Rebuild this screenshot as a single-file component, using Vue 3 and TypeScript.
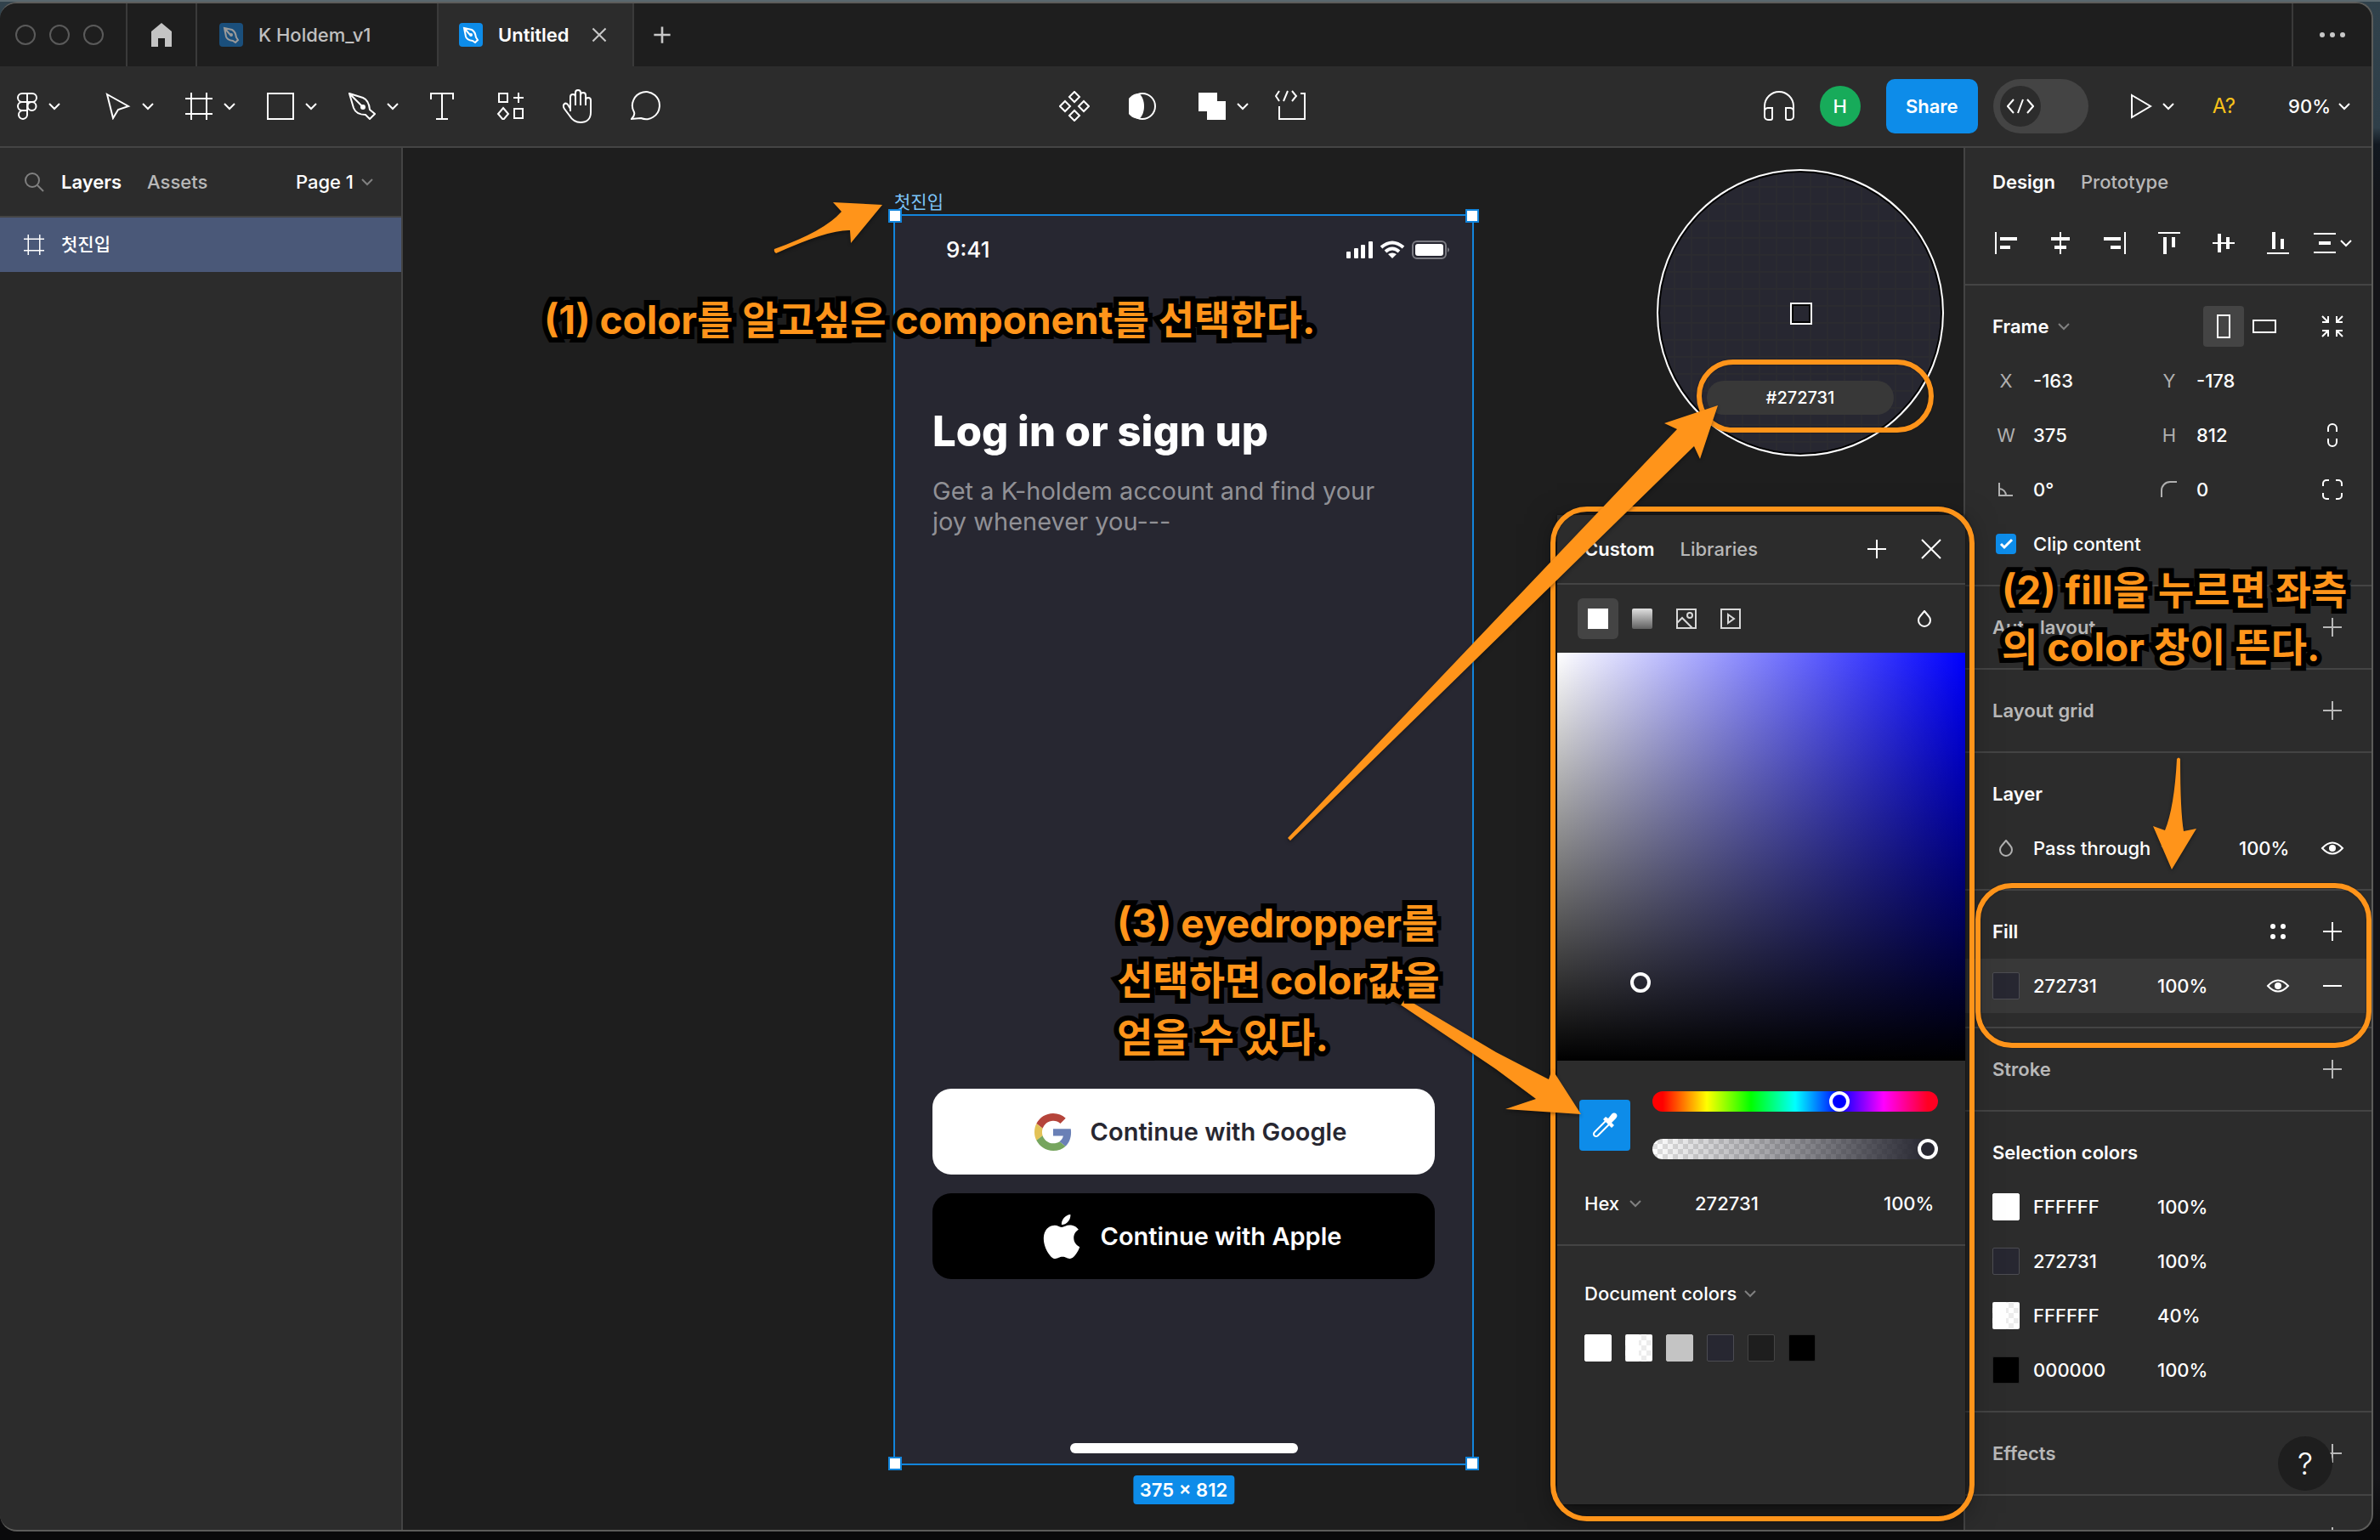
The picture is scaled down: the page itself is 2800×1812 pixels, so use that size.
<script setup lang="ts">
import { ref } from 'vue'

interface Paint {
  id: number
  hex: string
  opacity: string
  kind?: string
}

interface Tool {
  icon: string
  label: string
  menu: boolean
}

const leftTools: Tool[] = [
  { icon: 'move', label: 'Move', menu: true },
  { icon: 'frame', label: 'Frame', menu: true },
  { icon: 'rect', label: 'Rectangle', menu: true },
  { icon: 'pen', label: 'Pen', menu: true },
  { icon: 'text', label: 'Text', menu: false },
  { icon: 'resources', label: 'Resources', menu: false },
  { icon: 'hand', label: 'Hand', menu: false },
  { icon: 'comment', label: 'Comment', menu: false },
]

const centerTools: Tool[] = [
  { icon: 'component', label: 'Create component', menu: false },
  { icon: 'mask', label: 'Use as mask', menu: false },
  { icon: 'union', label: 'Union selection', menu: true },
  { icon: 'devbox', label: 'Ready for dev', menu: false },
]

const aligns = ['al-left', 'al-hc', 'al-right', 'al-top', 'al-vc', 'al-bottom']

const x = ref('-163')
const y = ref('-178')
const w = ref('375')
const h = ref('812')
const rotation = ref('0°')
const radius = ref('0')
const clip = ref(true)
const devMode = ref(false)
const fillHex = ref('272731')
const hue = ref(240)
const alpha = ref(100)

const selectionColors: Paint[] = [
  { id: 1, hex: 'FFFFFF', opacity: '100%', kind: 'white' },
  { id: 2, hex: '272731', opacity: '100%', kind: 'navy' },
  { id: 3, hex: 'FFFFFF', opacity: '40%', kind: 'half' },
  { id: 4, hex: '000000', opacity: '100%', kind: 'black' },
]

const documentColors = ['white', 'half', 'gray', 'navy', 'dark', 'black']
</script>

<template>
  <div class="desktop">
    <svg class="sprite" aria-hidden="true">
      <symbol id="chev" viewBox="0 0 16 16"><path d="M2 5l6 6 6-6" /></symbol>
      <symbol id="plus" viewBox="0 0 32 32"><path d="M5 16h22M16 5v22" /></symbol>
      <symbol id="minus" viewBox="0 0 32 32"><path d="M5 16h22" /></symbol>
      <symbol id="cross" viewBox="0 0 32 32"><path d="M5 5l22 22M27 5L5 27" /></symbol>
      <symbol id="logo" viewBox="0 0 32 32">
        <path d="M16 1h-6a5 5 0 0 0 0 10h6zM16 1h6a5 5 0 0 1 0 10h-6zM16 11h-6a5 5 0 0 0 0 10h6zM16 21h-6a5 5 0 1 0 6 5z" />
        <circle cx="21.500" cy="16" r="5" />
      </symbol>
      <symbol id="move" viewBox="0 0 32 32"><path d="M4 2l25 14-12 4-6 10z" /></symbol>
      <symbol id="frame" viewBox="0 0 32 32"><path d="M7 0v32M25 0v32M0 7h32M0 25h32" /></symbol>
      <symbol id="rect" viewBox="0 0 32 32"><path d="M1 1h30v30H1z" /></symbol>
      <symbol id="pen" viewBox="0 0 32 32">
        <path d="M1 1l16 5q7 3 8 14l6 5-6 6-5-5q-11 0-14-8zM1 1l15 15" />
        <circle cx="17" cy="17" r="2" fill="currentColor" />
      </symbol>
      <symbol id="text" viewBox="0 0 32 32"><path d="M3 8V1h26v7M16 1v30M9 31h14" /></symbol>
      <symbol id="resources" viewBox="0 0 32 32">
        <path d="M3 1h10v10H3zM21 19h10v11H21zM26 0v12M20 6h12M8 18l6 7-6 7-6-7z" />
      </symbol>
      <symbol id="hand" viewBox="0 0 40 40">
        <path d="M11 26V9a3 3 0 0 1 6 0V4a3 3 0 0 1 6 0v3a3 3 0 0 1 6 0v6a3 3 0 0 1 6 0v14c0 8-5 12-12 12-6 0-10-3-13-8L4 23c-3-5 1-8 4-5l3 5M17 8v11M23 7v12M29 9v10" />
      </symbol>
      <symbol id="comment" viewBox="0 0 36 36"><path d="M1 33c3-3 4-5 3-8A16 16 0 1 1 12 32z" /></symbol>
      <symbol id="component" viewBox="0 0 36 36">
        <path d="M18 1l6 6-6 6-6-6zM7 12l6 6-6 6-6-6zM29 12l6 6-6 6-6-6zM18 23l6 6-6 6-6-6z" />
      </symbol>
      <symbol id="mask" viewBox="0 0 32 32">
        <circle cx="16" cy="16" r="15" />
        <path d="M12 1a15 15 0 0 0 0 30c8-6 8-24 0-30z" fill="currentColor" stroke="none" />
      </symbol>
      <symbol id="union" viewBox="0 0 32 32">
        <path d="M0 0h22v10h10v22H10V22H0z" fill="currentColor" stroke="none" />
      </symbol>
      <symbol id="devbox" viewBox="0 0 40 40">
        <path d="M30 5h5v30H5V20M5 2L1 8l4 6M15 2l-5 12M20 2l5 6-5 6" />
      </symbol>
      <symbol id="code" viewBox="0 0 32 32"><path d="M8 8l-7 8 7 8M24 8l7 8-7 8M19 8l-6 16" /></symbol>
      <symbol id="headphones" viewBox="0 0 36 36">
        <path d="M1 30V18a17 17 0 0 1 34 0v12M10 20H5a4 4 0 0 0-4 4v6a4 4 0 0 0 4 4h3a2 2 0 0 0 2-2zM26 20h5a4 4 0 0 1 4 4v6a4 4 0 0 1-4 4h-3a2 2 0 0 1-2-2z" />
      </symbol>
      <symbol id="play" viewBox="0 0 32 32"><path d="M5 3l22 13L5 29z" /></symbol>
      <symbol id="search" viewBox="0 0 24 24"><circle cx="10" cy="10" r="8" /><path d="M16 16l7 7" /></symbol>
      <symbol id="al-left" viewBox="0 0 26 26"><path class="s" d="M0 0h2v26H0zM6 6h20v4H6zM6 16h12v4H6z" /></symbol>
      <symbol id="al-hc" viewBox="0 0 26 26"><path class="s" d="M12 0h2v26h-2zM2 6h22v4H2zM6 16h14v4H6z" /></symbol>
      <symbol id="al-right" viewBox="0 0 26 26"><path class="s" d="M24 0h2v26h-2zM0 6h20v4H0zM8 16h12v4H8z" /></symbol>
      <symbol id="al-top" viewBox="0 0 26 26"><path class="s" d="M0 0h26v2H0zM6 6h4v20H6zM16 6h4v12h-4z" /></symbol>
      <symbol id="al-vc" viewBox="0 0 26 26"><path class="s" d="M0 12h26v2H0zM6 2h4v22H6zM16 6h4v14h-4z" /></symbol>
      <symbol id="al-bottom" viewBox="0 0 26 26"><path class="s" d="M0 24h26v2H0zM6 0h4v20H6zM16 8h4v12h-4z" /></symbol>
      <symbol id="tidy" viewBox="0 0 26 26"><path class="s" d="M0 1h26v2H0zM0 23h26v2H0zM6 11h14v4H6z" /></symbol>
      <symbol id="shrink" viewBox="0 0 26 26">
        <path d="M1 1l7 7M1 8h7V1M25 1l-7 7M25 8h-7V1M1 25l7-7M1 18h7v7M25 25l-7-7M25 18h-7v7" />
      </symbol>
      <symbol id="link" viewBox="0 0 28 28"><path d="M9 10V6a5 5 0 0 1 10 0v4M9 18v4a5 5 0 0 0 10 0v-4" /></symbol>
      <symbol id="corners" viewBox="0 0 26 26">
        <path d="M2 9V6a4 4 0 0 1 4-4h3M17 2h3a4 4 0 0 1 4 4v3M24 17v3a4 4 0 0 1-4 4h-3M9 24H6a4 4 0 0 1-4-4v-3" />
      </symbol>
      <symbol id="angle" viewBox="0 0 20 20"><path d="M2 2v15h16M2 9a8 8 0 0 1 8 8" /></symbol>
      <symbol id="radius" viewBox="0 0 20 20"><path d="M1 19v-8A10 10 0 0 1 11 1h8" /></symbol>
      <symbol id="eye" viewBox="0 0 28 28">
        <path d="M2 14q12-13 24 0q-12 13-24 0z" />
        <circle cx="14" cy="14" r="4" fill="currentColor" stroke="none" />
      </symbol>
      <symbol id="drop" viewBox="0 0 20 20"><path d="M10 1l5 6a7 7 0 1 1-10 0z" /></symbol>
      <symbol id="dots" viewBox="0 0 20 20">
        <path class="s" d="M1 4a3 3 0 1 1 6 0a3 3 0 1 1-6 0M13 4a3 3 0 1 1 6 0a3 3 0 1 1-6 0M1 16a3 3 0 1 1 6 0a3 3 0 1 1-6 0M13 16a3 3 0 1 1 6 0a3 3 0 1 1-6 0" />
      </symbol>
      <symbol id="image" viewBox="0 0 24 24">
        <path d="M1 1h22v22H1zM1 17l6-6 12 12" />
        <circle cx="16" cy="8" r="3" />
      </symbol>
      <symbol id="video" viewBox="0 0 24 24"><path d="M1 1h22v22H1zM9 7l7 5-7 5z" /></symbol>
      <symbol id="dropper" viewBox="0 0 32 32">
        <path d="M17 11L4 24c-3 3 1 7 4 4l13-13" />
        <path class="s" d="M14 9l3-3 3 2 4-5c4-4 9 1 5 5l-5 5 3 3-3 3z" />
      </symbol>
      <symbol id="nib" viewBox="0 0 28 28">
        <path d="M6 6l9 2q4 2 5 9l2 3-3 3-3-2q-7-1-8-5zM6 6l7 8" />
        <circle cx="14" cy="14" r="1" />
      </symbol>
    </svg>

    <div class="window">
      <header class="tabs">
        <div class="lights"><i></i><i></i><i></i></div>
        <button class="home" aria-label="Home">
          <svg width="28" height="28" viewBox="0 0 28 28"><path d="M14 0L2 10v18h8V18h8v10h8V10z" fill="#c4c4c4" /></svg>
        </button>
        <a class="tab dim" href="#"><span class="file"><svg class="ic nib"><use href="#nib" /></svg></span>K Holdem_v1</a>
        <div class="tab active">
          <span class="file"><svg class="ic nib"><use href="#nib" /></svg></span>Untitled
          <button class="close" aria-label="Close tab"><svg class="ic heavy" width="22" height="22"><use href="#cross" /></svg></button>
        </div>
        <button class="newtab" aria-label="New tab"><svg class="ic heavy" width="28" height="28"><use href="#plus" /></svg></button>
        <button class="more" aria-label="More"><i></i><i></i><i></i></button>
      </header>

      <nav class="toolbar">
        <div class="group">
          <button class="tool logo menu" aria-label="Main menu">
            <svg class="ic"><use href="#logo" /></svg><svg class="ic chev"><use href="#chev" /></svg>
          </button>
          <button v-for="t in leftTools" :key="t.icon" class="tool" :class="[{ menu: t.menu }, t.icon]" :aria-label="t.label">
            <svg class="ic"><use :href="'#' + t.icon" /></svg>
            <svg v-if="t.menu" class="ic chev"><use href="#chev" /></svg>
          </button>
        </div>
        <div class="group">
          <button v-for="t in centerTools" :key="t.icon" class="tool" :class="[{ menu: t.menu }, t.icon]" :aria-label="t.label">
            <svg class="ic"><use :href="'#' + t.icon" /></svg>
            <svg v-if="t.menu" class="ic chev"><use href="#chev" /></svg>
          </button>
        </div>
        <div class="group end">
          <button class="phones" aria-label="Audio"><svg class="ic" width="36" height="36"><use href="#headphones" /></svg></button>
          <button class="avatar">H</button>
          <button class="share">Share</button>
          <label class="toggle">
            <input v-model="devMode" type="checkbox" aria-label="Dev Mode" />
            <span><svg class="ic"><use href="#code" /></svg></span>
          </label>
          <button class="present" aria-label="Present">
            <svg class="ic"><use href="#play" /></svg><svg class="ic chev"><use href="#chev" /></svg>
          </button>
          <button class="missing">A?</button>
          <button class="zoom">90%<svg class="ic chev"><use href="#chev" /></svg></button>
        </div>
      </nav>

      <div class="main">
        <aside class="left">
          <div class="lefthead">
            <svg class="ic search" width="24" height="24"><use href="#search" /></svg>
            <button class="strong">Layers</button>
            <button class="muted assets">Assets</button>
            <button class="page">Page 1<svg class="ic chev faint"><use href="#chev" /></svg></button>
          </div>
          <a class="layer" href="#"><svg class="ic" width="24" height="24"><use href="#frame" /></svg>첫진입</a>
        </aside>

        <section class="canvas">
          <span class="framelabel">첫진입</span>
          <div class="phone">
            <div class="status">
              <span>9:41</span>
              <svg width="122" height="22" viewBox="0 0 122 22">
                <path fill="#fff" d="M0 14q0-1 1-1h3q1 0 1 1v6q0 1-1 1H1q-1 0-1-1zM9 10q0-1 1-1h3q1 0 1 1v10q0 1-1 1h-3q-1 0-1-1zM17 6q0-1 1-1h3q1 0 1 1v14q0 1-1 1h-3q-1 0-1-1zM26 2q0-1 1-1h3q1 0 1 1v18q0 1-1 1h-3q-1 0-1-1z" />
                <g fill="none" stroke="#fff" stroke-width="4"><path d="M41 8q13-11 26 0M46 13q8-7 16 0" /></g>
                <path fill="#fff" d="M49 16q5-3 10 0l-5 5z" />
                <rect x="78" y="1" width="39" height="20" rx="5" fill="none" stroke="#7b7b82" stroke-width="2" />
                <rect x="81" y="4" width="33" height="14" rx="3" fill="#fff" />
                <path d="M119 8q4 3 0 6z" fill="#7b7b82" />
              </svg>
            </div>
            <h1>Log in or sign up</h1>
            <p>Get a K-holdem account and find your<br />joy whenever you---</p>
            <button class="login google">
              <svg width="44" height="44" viewBox="0 0 48 48">
                <path fill="#b5443a" d="M24 9.500c3.540 0 6.710 1.220 9.210 3.600l6.850-6.850C35.900 2.380 30.470 0 24 0 14.620 0 6.510 5.380 2.560 13.220l7.980 6.190C12.430 13.720 17.740 9.500 24 9.500z" />
                <path fill="#6a80b6" d="M46.980 24.550c0-1.570-.15-3.090-.38-4.550H24v9.020h12.940c-.58 2.960-2.260 5.480-4.780 7.180l7.730 6c4.510-4.180 7.090-10.360 7.090-17.650z" />
                <path fill="#e3c257" d="M10.530 28.590c-.48-1.450-.76-2.990-.76-4.590s.27-3.140.76-4.590l-7.980-6.190C.92 16.460 0 20.120 0 24c0 3.880.92 7.540 2.560 10.780l7.970-6.190z" />
                <path fill="#76a55e" d="M24 48c6.480 0 11.930-2.130 15.890-5.810l-7.730-6c-2.150 1.450-4.920 2.300-8.160 2.300-6.260 0-11.570-4.220-13.470-9.910l-7.980 6.190C6.510 42.620 14.620 48 24 48z" />
              </svg>
              Continue with Google
            </button>
            <button class="login apple">
              <svg width="52" height="52" viewBox="0 0 24 24">
                <path fill="#fff" d="M12.152 6.896c-.948 0-2.415-1.078-3.960-1.040-2.040.027-3.910 1.183-4.961 3.014-2.117 3.675-.546 9.103 1.519 12.090 1.013 1.454 2.208 3.090 3.792 3.039 1.520-.065 2.090-.987 3.935-.987 1.831 0 2.350.987 3.960.948 1.637-.026 2.676-1.480 3.676-2.948 1.156-1.688 1.636-3.325 1.662-3.415-.039-.013-3.182-1.221-3.220-4.857-.026-3.040 2.480-4.494 2.597-4.559-1.429-2.090-3.623-2.324-4.390-2.376-2-.156-3.675 1.090-4.610 1.090zM15.530 3.830c.843-1.012 1.400-2.427 1.245-3.830-1.207.052-2.662.805-3.532 1.818-.78.896-1.454 2.338-1.273 3.714 1.338.104 2.715-.688 3.559-1.701" />
              </svg>
              Continue with Apple
            </button>
            <i class="homebar"></i>
            <i class="grip tl"></i><i class="grip tr"></i><i class="grip bl"></i><i class="grip br"></i>
            <span class="size">375 × 812</span>
          </div>

          <div class="loupe">
            <i class="pixel"></i>
            <span>#272731</span>
          </div>
        </section>

        <aside class="right">
          <div class="righthead">
            <button class="strong">Design</button>
            <button class="muted">Prototype</button>
          </div>
          <div class="aligns">
            <button v-for="a in aligns" :key="a" :aria-label="a"><svg class="ic" width="26" height="26"><use :href="'#' + a" /></svg></button>
            <button class="tidy" aria-label="Tidy up">
              <svg class="ic" width="26" height="26"><use href="#tidy" /></svg><svg class="ic chev"><use href="#chev" /></svg>
            </button>
          </div>

          <section class="sec">
            <div class="row title">
              <button class="strong framebtn">Frame<svg class="ic chev faint"><use href="#chev" /></svg></button>
              <button class="orient on" aria-label="Portrait"><i class="port"></i></button>
              <button class="orient" aria-label="Landscape"><i class="land"></i></button>
              <button class="cell gap16" aria-label="Resize to fit"><svg class="ic" width="26" height="26"><use href="#shrink" /></svg></button>
            </div>
            <div class="row grid">
              <label for="fx">X</label><input id="fx" v-model="x" />
              <label for="fy">Y</label><input id="fy" v-model="y" />
            </div>
            <div class="row grid">
              <label for="fw">W</label><input id="fw" v-model="w" />
              <label for="fh">H</label><input id="fh" v-model="h" />
              <button class="cell" aria-label="Constrain proportions"><svg class="ic" width="28" height="28"><use href="#link" /></svg></button>
            </div>
            <div class="row grid">
              <label for="fr" aria-label="Rotation"><svg class="ic" width="20" height="20"><use href="#angle" /></svg></label>
              <input id="fr" v-model="rotation" />
              <label for="fc" aria-label="Corner radius"><svg class="ic" width="20" height="20"><use href="#radius" /></svg></label>
              <input id="fc" v-model="radius" />
              <button class="cell" aria-label="Independent corners"><svg class="ic" width="26" height="26"><use href="#corners" /></svg></button>
            </div>
            <label class="row clip"><input v-model="clip" type="checkbox" /><span>Clip content</span></label>
          </section>

          <section class="sec">
            <div class="row title off"><h2>Auto layout</h2><button class="cell" aria-label="Add auto layout"><svg class="ic"><use href="#plus" /></svg></button></div>
          </section>
          <section class="sec">
            <div class="row title off"><h2>Layout grid</h2><button class="cell" aria-label="Add layout grid"><svg class="ic"><use href="#plus" /></svg></button></div>
          </section>
          <section class="sec">
            <div class="row title"><h2>Layer</h2></div>
            <div class="row paint">
              <span class="cell soft"><svg class="ic" width="20" height="20"><use href="#drop" /></svg></span>
              <span class="blend">
                <select aria-label="Blend mode"><option>Pass through</option></select>
                <svg class="ic chev faint"><use href="#chev" /></svg>
              </span>
              <input class="layerpct" aria-label="Layer opacity" value="100%" />
              <button class="cell" aria-label="Toggle visibility"><svg class="ic" width="28" height="28"><use href="#eye" /></svg></button>
            </div>
          </section>
          <section class="sec">
            <div class="row title">
              <h2>Fill</h2>
              <button class="cell" aria-label="Styles"><svg class="ic" width="20" height="20"><use href="#dots" /></svg></button>
              <button class="cell" aria-label="Add fill"><svg class="ic"><use href="#plus" /></svg></button>
            </div>
            <div class="row paint lit">
              <button class="cell" aria-label="Fill color"><i class="swatch navy"></i></button>
              <input v-model="fillHex" class="hex" aria-label="Fill hex" />
              <input class="pct" aria-label="Fill opacity" value="100%" />
              <button class="cell" aria-label="Toggle fill"><svg class="ic" width="28" height="28"><use href="#eye" /></svg></button>
              <button class="cell" aria-label="Remove fill"><svg class="ic"><use href="#minus" /></svg></button>
            </div>
          </section>
          <section class="sec">
            <div class="row title off"><h2>Stroke</h2><button class="cell" aria-label="Add stroke"><svg class="ic"><use href="#plus" /></svg></button></div>
          </section>
          <section class="sec">
            <div class="row title"><h2>Selection colors</h2></div>
            <div v-for="c in selectionColors" :key="c.id" class="row paint">
              <button class="cell" aria-label="Color"><i class="swatch" :class="c.kind"></i></button>
              <input class="hex" aria-label="Hex" :value="c.hex" />
              <input class="pct" aria-label="Opacity" :value="c.opacity" />
            </div>
          </section>
          <section class="sec">
            <div class="row title off"><h2>Effects</h2><button class="cell" aria-label="Add effect"><svg class="ic"><use href="#plus" /></svg></button></div>
          </section>
          <section class="sec">
            <div class="row title off"><h2>Export</h2><button class="cell" aria-label="Add export"><svg class="ic"><use href="#plus" /></svg></button></div>
          </section>
        </aside>

        <div class="picker">
          <div class="pickhead">
            <button class="strong">Custom</button>
            <button class="muted">Libraries</button>
            <button class="cell push" aria-label="Create style"><svg class="ic"><use href="#plus" /></svg></button>
            <button class="cell" aria-label="Close"><svg class="ic"><use href="#cross" /></svg></button>
          </div>
          <div class="kinds">
            <button class="on" aria-label="Solid"><i class="solid"></i></button>
            <button aria-label="Gradient"><i class="gradient"></i></button>
            <button aria-label="Image"><svg class="ic" width="24" height="24"><use href="#image" /></svg></button>
            <button aria-label="Video"><svg class="ic" width="24" height="24"><use href="#video" /></svg></button>
            <button class="push" aria-label="Blend"><svg class="ic" width="20" height="20"><use href="#drop" /></svg></button>
          </div>
          <div class="field"><i class="knob"></i></div>
          <div class="sliders">
            <button class="dropper" aria-label="Eyedropper"><svg class="ic"><use href="#dropper" /></svg></button>
            <div class="ranges">
              <input v-model="hue" class="range hue" type="range" min="0" max="360" aria-label="Hue" />
              <input v-model="alpha" class="range alpha" type="range" min="0" max="100" aria-label="Alpha" />
            </div>
          </div>
          <div class="values">
            <span class="mode">
              <select aria-label="Color model"><option>Hex</option></select>
              <svg class="ic chev faint"><use href="#chev" /></svg>
            </span>
            <input v-model="fillHex" class="phex" aria-label="Hex value" />
            <input class="ppct" aria-label="Opacity value" value="100%" />
          </div>
          <div class="doc">
            <button class="dochead">Document colors<svg class="ic chev faint"><use href="#chev" /></svg></button>
            <div class="docrow">
              <button v-for="d in documentColors" :key="d" class="swatch" :class="d" :aria-label="d"></button>
            </div>
          </div>
        </div>

        <button class="help">?</button>
      </div>
    </div>

    <div class="notes">
      <i class="ring ring-picker"></i>
      <i class="ring ring-fill"></i>
      <i class="ring ring-hex"></i>
      <svg class="arrows">
        <path d="M911 293Q970 272 990 249L980 238L1038 241L1001 286L1000 271Q975 270 913 298Q910 296 911 293z" />
        <path d="M1515 986L1973 505L1958 498L2021 477L2000 540L1993 525L1518 989z" />
        <path d="M1642 1168L1760 1238L1822 1270L1826 1258L1860 1311L1771 1305L1807 1293L1760 1258L1640 1177z" />
        <path d="M2561 893Q2563 890 2565 893Q2565 955 2569 978L2584 975L2555 1023L2533 972L2547 977Q2558 950 2561 893z" />
      </svg>
      <p class="note n1">(1) color를 알고싶은 component를 선택한다.</p>
      <p class="note n2">(2) fill을 누르면 좌측<br />의 color 창이 뜬다.</p>
      <p class="note n3">(3) eyedropper를<br />선택하면 color값을<br />얻을 수 있다.</p>
    </div>
  </div>
</template>

<style>
body {
  margin: 0;
  background: #0a0a0b;
}
</style>

<style scoped>
.desktop {
  position: relative;
  box-sizing: border-box;
  height: 100vh;
  padding: 2px 8px 10px 0;
  overflow: hidden;
  background: linear-gradient(#5a686e 2px, #31424c 2px, #2f3f49 150px, #111820 170px, #141418 240px, #141418 1740px, #0a0a0b 1800px);
  font-family: Inter, "Noto Sans CJK KR", sans-serif;
  font-size: 22px;
  font-weight: 500;
  line-height: 32px;
  color: #fff;
}
.sprite { display: none; }
.s { fill: currentColor; stroke: none; }
button, input, select {
  font: inherit;
  color: inherit;
  background: none;
  border: 0;
  padding: 0;
  margin: 0;
  outline: 0;
}
button {
  display: flex;
  align-items: center;
  justify-content: center;
}
input { min-width: 0; }
select { appearance: none; }
a { color: inherit; text-decoration: none; }
h1, h2, p { margin: 0; }
i { display: block; box-sizing: border-box; }
.ic {
  flex: none;
  width: 32px;
  height: 32px;
  fill: none;
  stroke: currentColor;
  stroke-width: 2;
  overflow: visible;
}
.ic[width="20"] { width: 20px; height: 20px; }
.ic[width="22"] { width: 22px; height: 22px; }
.ic[width="24"] { width: 24px; height: 24px; }
.ic[width="26"] { width: 26px; height: 26px; }
.ic[width="28"] { width: 28px; height: 28px; }
.ic[width="36"] { width: 36px; height: 36px; }
.ic.chev { width: 16px; height: 16px; }
.heavy { stroke-width: 3; }
.faint { color: #808080; }
.strong { font-weight: 600; }
.muted { color: #b8b8b8; }
.push { margin-left: auto; }

.window {
  display: flex;
  flex-direction: column;
  box-sizing: border-box;
  height: 100%;
  border: 2px solid #5c5c5a;
  border-left: 0;
  border-radius: 20px;
  overflow: hidden;
  background: #2c2c2c;
}

.tabs {
  display: flex;
  flex: none;
  height: 74px;
  background: #1e1e1e;
}
.lights {
  display: flex;
  align-items: center;
  gap: 16px;
  width: 150px;
  box-sizing: border-box;
  padding-left: 18px;
  border-right: 2px solid #3a3a3a;
}
.lights i {
  width: 24px;
  height: 24px;
  border: 2px solid #5a5a5a;
  border-radius: 50%;
}
.home {
  width: 82px;
  border-right: 2px solid #3a3a3a;
}
.tab {
  display: flex;
  align-items: center;
  box-sizing: border-box;
  width: 284px;
  padding-left: 26px;
  border-right: 2px solid #3a3a3a;
  color: #c0c0c0;
}
.tab.active {
  width: 230px;
  padding-left: 24px;
  background: #2c2c2c;
  color: #fff;
  font-weight: 600;
}
.file {
  width: 28px;
  height: 28px;
  margin-right: 18px;
  border-radius: 4px;
  background: #0d8ce9;
}
.dim .file { background: #1a4f7c; color: #9a9a9a; }
.file .ic { display: block; width: 28px; height: 28px; }
.close { margin-left: auto; margin-right: 28px; color: #c8c8c8; }
.newtab { width: 66px; color: #c8c8c8; }
.more {
  gap: 6px;
  width: 94px;
  margin-left: auto;
  border-left: 2px solid #3a3a3a;
}
.more i {
  width: 6px;
  height: 6px;
  border-radius: 50%;
  background: #c8c8c8;
}

.toolbar {
  display: grid;
  grid-template-columns: 1fr auto 1fr;
  flex: none;
  height: 94px;
  padding-right: 6px;
  border-bottom: 2px solid #444;
}
.group { display: flex; align-items: center; }
.end { justify-content: flex-end; }
.tool { width: 80px; height: 94px; }
.tool.menu {
  gap: 12px;
  width: 96px;
  padding-left: 26px;
  justify-content: flex-start;
}
.tool.logo { gap: 8px; padding-left: 16px; }
.hand .ic, .devbox .ic { width: 40px; height: 40px; }
.comment .ic, .component .ic { width: 36px; height: 36px; }
.phones { width: 36px; margin-right: 30px; }
.avatar {
  width: 48px;
  height: 48px;
  border-radius: 50%;
  background: #17ab5a;
}
.share {
  width: 108px;
  height: 64px;
  margin: 0 18px 0 30px;
  border-radius: 10px;
  background: #0d8ce9;
  font-weight: 600;
}
.toggle {
  box-sizing: border-box;
  width: 112px;
  height: 64px;
  padding: 8px;
  border-radius: 32px;
  background: #444;
}
.toggle input { position: absolute; opacity: 0; }
.toggle span {
  display: flex;
  align-items: center;
  justify-content: center;
  width: 48px;
  height: 48px;
  border-radius: 50%;
  background: #2c2c2c;
}
.present { gap: 8px; margin-left: 46px; }
.missing { margin-left: 44px; color: #f7c21a; font-size: 24px; font-weight: 400; }
.zoom { gap: 8px; margin: 0 18px 0 62px; }

.main {
  position: relative;
  display: flex;
  flex: 1;
  min-height: 0;
}
.left {
  flex: none;
  box-sizing: border-box;
  width: 474px;
  border-right: 2px solid #444;
}
.lefthead {
  display: flex;
  align-items: center;
  height: 80px;
  padding: 0 32px 0 28px;
  border-bottom: 2px solid #444;
}
.search { margin-right: 20px; color: #808080; }
.assets { margin-left: 30px; }
.page { gap: 8px; margin-left: auto; }
.layer {
  display: flex;
  align-items: center;
  gap: 20px;
  height: 64px;
  padding-left: 28px;
  background: #4a5878;
  font-size: 21px;
}

.canvas {
  position: relative;
  flex: 1;
  min-width: 0;
  background: #1e1e1e;
  overflow: hidden;
}
.framelabel {
  position: absolute;
  left: 578px;
  top: 48px;
  color: #7cc4f8;
  font-size: 21px;
  font-weight: 400;
}
.phone {
  position: absolute;
  left: 577px;
  top: 78px;
  display: flex;
  flex-direction: column;
  box-sizing: border-box;
  width: 683px;
  height: 1472px;
  padding: 0 44px;
  border: 2px solid #1285dc;
  background: #272731;
}
.status {
  display: flex;
  align-items: center;
  justify-content: space-between;
  height: 80px;
  padding-left: 16px;
  font-size: 26px;
  margin-right: -18px;
}
h1 {
  margin-top: 144px;
  font-size: 49px;
  font-weight: 800;
  line-height: 60px;
}
p { color: #919196; }
.phone p {
  height: 72px;
  margin-top: 22px;
  font-size: 29px;
  font-weight: 400;
  line-height: 36px;
}
.login {
  flex: none;
  height: 101px;
  padding-left: 16px;
  border-radius: 22px;
  font-size: 29px;
  font-weight: 600;
}
.google {
  gap: 22px;
  margin-top: 649px;
  background: #fff;
  color: #272731;
}
.apple {
  gap: 20px;
  margin-top: 22px;
  background: #000;
}
.homebar {
  width: 268px;
  height: 12px;
  margin: auto auto 12px;
  border-radius: 6px;
  background: #fff;
}
.grip {
  position: absolute;
  width: 16px;
  height: 16px;
  border: 2px solid #1285dc;
  background: #fff;
}
.tl { left: -8px; top: -8px; }
.tr { right: -8px; top: -8px; }
.bl { left: -8px; bottom: -8px; }
.br { right: -8px; bottom: -8px; }
.size {
  position: absolute;
  left: 50%;
  top: 100%;
  margin-top: 14px;
  padding: 1px 8px;
  border-radius: 4px;
  background: #0d8ce9;
  font-weight: 600;
  transform: translateX(-50%);
  white-space: nowrap;
}

.loupe {
  position: absolute;
  right: 23px;
  top: 25px;
  display: flex;
  justify-content: center;
  box-sizing: border-box;
  width: 338px;
  height: 338px;
  border: 2px solid #fff;
  border-radius: 50%;
  box-shadow: inset 0 0 0 2px #000;
  background:
    repeating-linear-gradient(90deg, transparent 0 18px, #2b2b30 18px 20px),
    repeating-linear-gradient(transparent 0 18px, #2b2b30 18px 20px),
    #272731;
}
.pixel {
  position: absolute;
  left: 155px;
  top: 155px;
  width: 26px;
  height: 26px;
  border: 2px solid #fff;
  box-shadow: inset 0 0 0 2px #000;
}
.loupe span {
  width: 220px;
  height: 40px;
  margin-top: 247px;
  border-radius: 20px;
  background: #383838;
  font-size: 20px;
  line-height: 40px;
  text-align: center;
}

.right {
  flex: none;
  box-sizing: border-box;
  width: 480px;
  border-left: 2px solid #444;
  overflow: hidden;
}
.righthead {
  display: flex;
  gap: 30px;
  height: 80px;
  padding-left: 32px;
}
.aligns {
  display: flex;
  height: 64px;
  padding: 0 0 16px 16px;
  border-bottom: 2px solid #444;
}
.aligns button { width: 64px; }
.aligns .tidy { gap: 4px; justify-content: flex-start; padding-left: 10px; }
.sec {
  padding: 16px 0;
  border-bottom: 2px solid #444;
}
.row {
  display: flex;
  align-items: center;
  height: 64px;
  padding: 0 14px 0 16px;
}
.title { padding-left: 32px; }
.title > :first-child { margin-right: auto; }
h2 { font-size: 22px; font-weight: 600; line-height: 32px; }
.off { color: #b8b8b8; }
.cell {
  display: flex;
  align-items: center;
  justify-content: center;
  flex: none;
  width: 64px;
  height: 64px;
}
.framebtn { gap: 10px; }
.orient { width: 48px; height: 48px; border-radius: 4px; }
.orient.on { background: #444; }
.port { width: 16px; height: 28px; border: 2px solid #fff; }
.land { width: 28px; height: 16px; border: 2px solid #fff; }
.gap16 { margin-left: 24px; }
.grid {
  display: grid;
  grid-template-columns: 64px 128px 64px 128px 64px;
}
.grid label {
  display: flex;
  justify-content: center;
  color: #b0b0b0;
  font-weight: 400;
}
.grid input { width: 120px; }
.clip input {
  appearance: none;
  width: 24px;
  height: 24px;
  margin: 0 20px;
  border-radius: 4px;
  background: #0d8ce9 url("data:image/svg+xml,%3Csvg xmlns='http://www.w3.org/2000/svg' viewBox='0 0 24 24'%3E%3Cpath d='M6 12l4 4 9-9' fill='none' stroke='white' stroke-width='3'/%3E%3C/svg%3E");
}
.soft { color: #b0b0b0; }
.blend { display: flex; align-items: center; gap: 10px; width: 242px; }
.layerpct { width: 78px; }
.lit { background: #383838; }
.hex { width: 146px; }
.pct { width: 110px; }
.swatch {
  display: block;
  box-sizing: border-box;
  width: 32px;
  height: 32px;
  border: 1px solid transparent;
  border-radius: 2px;
}
.white { background: #fff; border-color: #fff; }
.gray { background: #c4c4c4; border-color: #c4c4c4; }
.navy { background: #272731; border-color: #4c4c52; }
.dark { background: #1e1e1e; border-color: #444; }
.black { background: #000; border-color: #262626; }
.half {
  background:
    linear-gradient(90deg, #fff 50%, transparent 50%),
    repeating-conic-gradient(#ececec 0 25%, #fff 0 50%) 0 0 / 12px 12px;
}

.picker {
  position: absolute;
  right: 478px;
  top: 432px;
  width: 480px;
  height: 1164px;
  background: #2c2c2c;
  box-shadow: 0 10px 32px rgba(0, 0, 0, .5), 0 0 4px rgba(0, 0, 0, .6);
}
.pickhead {
  display: flex;
  align-items: center;
  height: 80px;
  padding: 0 8px 0 32px;
  border-bottom: 2px solid #444;
}
.pickhead .muted { margin-left: 30px; }
.kinds {
  display: flex;
  align-items: center;
  gap: 4px;
  height: 80px;
  padding: 0 24px;
  color: #d8d8d8;
}
.kinds button { width: 48px; height: 48px; border-radius: 6px; }
.kinds .on { background: #444; }
.kinds .push { color: #fff; }
.solid { width: 24px; height: 24px; background: #fff; }
.gradient { width: 24px; height: 24px; border-radius: 2px; background: linear-gradient(#e0e0e0, #606060); }
.field {
  position: relative;
  height: 480px;
  background: linear-gradient(transparent, #000), linear-gradient(90deg, #fff, #00f);
}
.knob {
  position: absolute;
  left: 86px;
  top: 376px;
  width: 24px;
  height: 24px;
  border: 4px solid #fff;
  border-radius: 50%;
}
.sliders {
  display: flex;
  align-items: center;
  gap: 26px;
  height: 104px;
  padding: 24px 32px 8px 26px;
}
.dropper {
  flex: none;
  width: 60px;
  height: 60px;
  border-radius: 4px;
  background: #0d8ce9;
}
.ranges { display: flex; flex: 1; flex-direction: column; gap: 32px; }
.range {
  appearance: none;
  width: 100%;
  height: 24px;
  border-radius: 12px;
}
.hue { background: linear-gradient(90deg, #f00 12px, #ff0 64px, #0f0 116px, #0ff 168px, #00f 220px, #f0f 272px, #f02 324px); }
.alpha {
  background:
    linear-gradient(90deg, transparent, #272731 calc(100% - 12px)),
    repeating-conic-gradient(#e0e0e0 0 25%, #fff 0 50%) 0 0 / 12px 12px;
}
.range::-webkit-slider-thumb {
  appearance: none;
  box-sizing: border-box;
  width: 24px;
  height: 24px;
  border: 4px solid #fff;
  border-radius: 50%;
  background: #00f;
}
.alpha::-webkit-slider-thumb { background: #272731; }
.values {
  display: flex;
  align-items: center;
  height: 48px;
  padding: 8px 24px 24px 32px;
  border-bottom: 2px solid #444;
}
.mode { display: flex; align-items: center; gap: 10px; width: 130px; }
.phex { width: 222px; }
.ppct { width: 72px; }
.doc { padding: 40px 32px; }
.dochead { gap: 8px; }
.docrow { display: flex; gap: 16px; margin-top: 32px; }

.help {
  position: absolute;
  right: 46px;
  bottom: 46px;
  width: 64px;
  height: 64px;
  border-radius: 50%;
  background: #1e1e1e;
  font-size: 36px;
  font-weight: 300;
}

.notes {
  position: absolute;
  inset: 0;
  pointer-events: none;
}
.ring {
  position: absolute;
  border: 6px solid #ff941a;
  border-radius: 43px;
  box-shadow: 0 0 2px #0008, inset 0 0 2px #0008;
}
.ring-picker { right: 477px; top: 596px; width: 499px; height: 1194px; }
.ring-fill { right: 10px; top: 1039px; width: 466px; height: 194px; }
.ring-hex { right: 525px; top: 423px; width: 279px; height: 86px; }
.arrows {
  position: absolute;
  inset: 0;
  width: 100%;
  height: 100%;
  fill: #ff941a;
  filter: drop-shadow(0 2px 2px rgba(0, 0, 0, .4));
}
.note {
  position: absolute;
  color: #ff941a;
  font-size: 46px;
  font-weight: 700;
  line-height: 67px;
  white-space: nowrap;
  -webkit-text-stroke: 12px #000;
  paint-order: stroke fill;
  stroke-linejoin: round;
}
.n1 { left: 640px; top: 343px; }
.n2 { left: 2355px; top: 661px; }
.n3 { left: 1314px; top: 1053px; }
</style>
